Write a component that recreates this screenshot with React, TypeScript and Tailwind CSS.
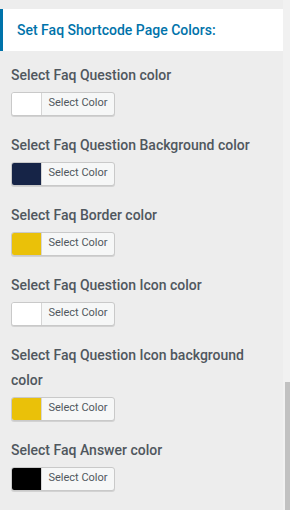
import React from 'react';

const fields: { label: string; color: string }[] = [
  { label: 'Select Faq Question color', color: '#ffffff' },
  { label: 'Select Faq Question Background color', color: '#162447' },
  { label: 'Select Faq Border color', color: '#eac109' },
  { label: 'Select Faq Question Icon color', color: '#ffffff' },
  { label: 'Select Faq Question Icon background color', color: '#eac109' },
  { label: 'Select Faq Answer color', color: '#000000' },
];

function ColorButton({ color }: { color: string }) {
  return (
    <div className="mt-[4px] flex h-[24px] w-[104px] overflow-hidden rounded-[3px] border border-[#c9c9c9] bg-[#f6f7f7] shadow-[0_1px_0_#d2d2d2]">
      <span className="h-full w-[30px] border-r border-[#d5d5d5]" style={{ backgroundColor: color }} />
      <span className="flex flex-1 items-center justify-center text-[11px] text-[#50575e]">Select Color</span>
    </div>
  );
}

export default function App() {
  return (
    <div className="flex h-[510px] w-[290px] bg-[#ededed] font-['Roboto',sans-serif]">
      <div className="w-[283px] pt-[9px]">
        <div className="flex h-[42px] items-center border-l-[3px] border-[#0073aa] bg-white pl-[14px]">
          <h2 className="text-[14px] font-medium text-[#0073aa]">Set Faq Shortcode Page Colors:</h2>
        </div>
        <div className="flex flex-col gap-[17px] pl-[11px] pr-[10px] pt-[11.5px]">
          {fields.map((f) => (
            <div key={f.label}>
              <div className="text-[14px] font-medium leading-[25px] text-[#50575e]">{f.label}</div>
              <ColorButton color={f.color} />
            </div>
          ))}
        </div>
      </div>
      <div className="flex w-[7px] flex-col bg-[#f1f1f1]">
        <div className="h-[382px]" />
        <div className="ml-[2px] flex-1 bg-[#c1c1c1]" />
      </div>
    </div>
  );
}
